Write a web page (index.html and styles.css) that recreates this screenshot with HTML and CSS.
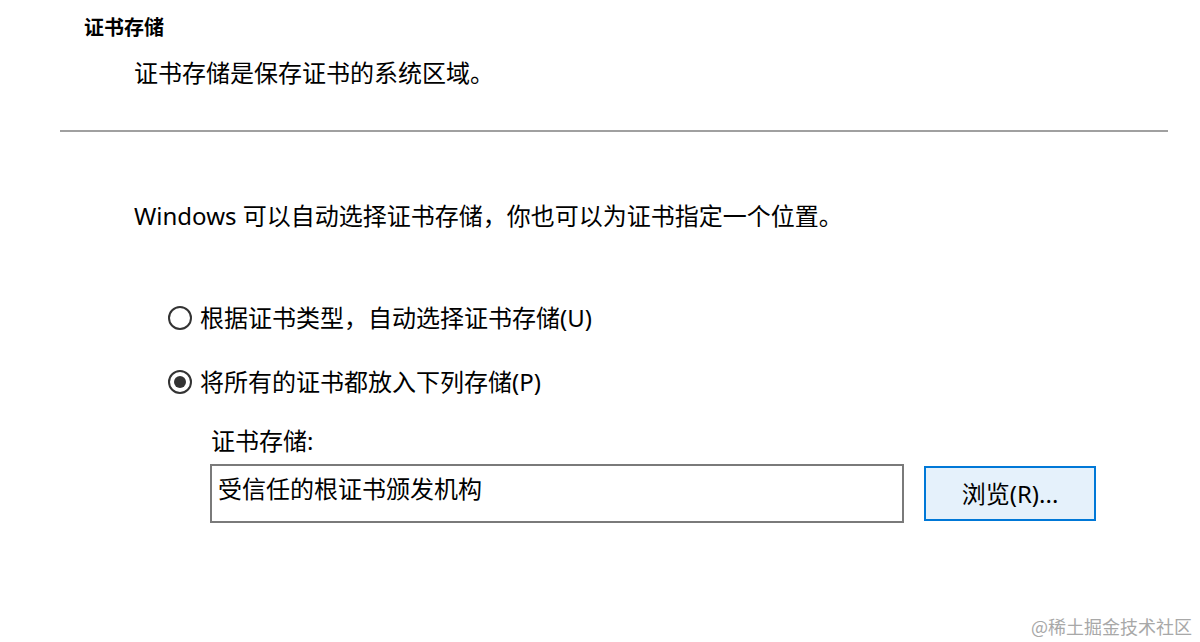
FILE: index.html
```html
<!DOCTYPE html>
<html lang="zh-CN">
<head>
<meta charset="utf-8">
<title>证书存储</title>
<link rel="stylesheet" href="styles.css">
</head>
<body>
<div class="page">
  <div class="header">
    <div class="title">证书存储</div>
    <div class="subtitle">证书存储是保存证书的系统区域。</div>
  </div>
  <div class="divider"></div>
  <div class="content">
    <div class="intro">Windows 可以自动选择证书存储，你也可以为证书指定一个位置。</div>
    <div class="options">
      <div class="radio-row">
        <span class="radio"></span>
        <span class="radio-label">根据证书类型，自动选择证书存储(U)</span>
      </div>
      <div class="radio-row">
        <span class="radio checked"><span class="dot"></span></span>
        <span class="radio-label">将所有的证书都放入下列存储(P)</span>
      </div>
    </div>
    <div class="store">
      <div class="store-label">证书存储:</div>
      <div class="store-row">
        <div class="store-input">受信任的根证书颁发机构</div>
        <div class="browse-btn">浏览(R)...</div>
      </div>
    </div>
  </div>
  <div class="watermark">@稀土掘金技术社区</div>
</div>
</body>
</html>
```
FILE: styles.css
```css
* { box-sizing: border-box; }
html, body {
  margin: 0;
  padding: 0;
  background: #ffffff;
}
body {
  width: 1200px;
  height: 642px;
  overflow: hidden;
  font-family: "Noto Sans", "Noto Sans CJK SC", sans-serif;
  color: #000;
}
.page {
  position: relative;
  width: 1200px;
  height: 642px;
}
.header {
  padding-top: 13px;
}
.title {
  padding-left: 84px;
  font-size: 20px;
  font-weight: 700;
  line-height: 28px;
  font-family: "Noto Sans CJK SC", sans-serif;
}
.subtitle {
  margin-top: 16px;
  padding-left: 134px;
  font-size: 24px;
  line-height: 32px;
}
.divider {
  margin-top: 41px;
  margin-left: 60px;
  width: 1108px;
  height: 2px;
  background: #a0a0a0;
}
.content {
  padding-left: 134px;
}
.intro {
  margin-top: 68px;
  font-size: 24px;
  line-height: 32px;
}
.options {
  margin-top: 70px;
  padding-left: 34px;
  display: flex;
  flex-direction: column;
  gap: 32px;
}
.radio-row {
  display: flex;
  align-items: center;
  height: 32px;
  gap: 8px;
}
.radio {
  width: 24px;
  height: 24px;
  border: 2px solid #333;
  border-radius: 50%;
  display: flex;
  align-items: center;
  justify-content: center;
  flex: none;
}
.dot {
  width: 12px;
  height: 12px;
  border-radius: 50%;
  background: #333;
}
.radio-label {
  font-size: 24px;
  line-height: 32px;
}
.store {
  margin-top: 27px;
  padding-left: 76px;
}
.store-label {
  padding-left: 1px;
  font-size: 24px;
  line-height: 32px;
}
.store-row {
  margin-top: 7px;
  display: flex;
  align-items: flex-start;
  gap: 20px;
}
.store-input {
  width: 694px;
  height: 59px;
  border: 2px solid #7a7a7a;
  padding: 7px 0 0 6px;
  font-size: 24px;
  line-height: 32px;
}
.browse-btn {
  margin-top: 2px;
  width: 172px;
  height: 55px;
  border: 2px solid #0078d7;
  background: #e5f1fb;
  display: flex;
  align-items: center;
  justify-content: center;
  font-size: 24px;
  line-height: 32px;
}
.watermark {
  position: absolute;
  right: 8px;
  bottom: 4px;
  font-size: 18px;
  line-height: 24px;
  color: #a8a8a8;
  font-family: "Noto Sans CJK SC", sans-serif;
}
```
